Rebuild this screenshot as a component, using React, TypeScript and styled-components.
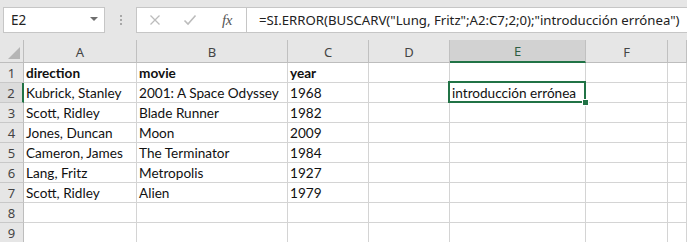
import React from "react";
import styled, { createGlobalStyle, css } from "styled-components";

const Global = createGlobalStyle`
  html, body { margin: 0; padding: 0; background: #ffffff; }
  body { width: 687px; height: 242px; overflow: hidden; }
`;

const Page = styled.div`
  width: 687px;
  height: 242px;
  overflow: hidden;
  display: flex;
  flex-direction: column;
  background: #fff;
`;

const FormulaBar = styled.div`
  height: 40px;
  flex: none;
  background: #e6e6e6;
  display: flex;
  align-items: flex-start;
  padding: 7px 0 0 3px;
  box-sizing: border-box;
`;

const NameBox = styled.div`
  width: 102px;
  height: 26px;
  box-sizing: border-box;
  background: #fff;
  border: 1px solid #c6c6c6;
  display: flex;
  align-items: center;
  justify-content: space-between;
  padding: 0 6px 0 7px;
  font-family: "Noto Sans", "Open Sans", sans-serif;
  font-size: 13.5px;
  color: #222;
`;

const Caret = styled.span`
  width: 0;
  height: 0;
  border-left: 4px solid transparent;
  border-right: 4px solid transparent;
  border-top: 4px solid #6e6e6e;
  margin-bottom: 3px;
`;

const Grip = styled.div`
  width: 31px;
  height: 26px;
  display: flex;
  flex-direction: column;
  align-items: center;
  justify-content: center;
  gap: 2px;
`;

const GripDot = styled.span`
  width: 2px;
  height: 2px;
  background: #a8a8a8;
`;

const IconBox = styled.div`
  width: 110px;
  height: 26px;
  box-sizing: border-box;
  background: #fff;
  border: 1px solid #c6c6c6;
  border-right: none;
  display: flex;
  align-items: center;
  padding-left: 12px;
  gap: 22px;
`;

const Fx = styled.span`
  font-family: "Liberation Serif", serif;
  font-style: italic;
  font-size: 15px;
  color: #555;
  letter-spacing: -0.5px;
  margin-left: 3px;
`;

const FormulaInput = styled.div`
  flex: 1;
  height: 26px;
  box-sizing: border-box;
  background: #fff;
  border: 1px solid #c6c6c6;
  border-right: none;
  display: flex;
  align-items: center;
  padding-left: 12px;
  font-family: "Noto Sans", "Open Sans", sans-serif;
  font-size: 13.2px;
  color: #222;
  white-space: nowrap;
  overflow: hidden;
`;

const Sheet = styled.div`
  display: grid;
  grid-template-columns: 24px 113px 151px 81px 81px 136px 82px 1fr;
  grid-template-rows: 23px repeat(9, 20px);
  font-family: "Lato", "Liberation Sans", sans-serif;
`;

const Corner = styled.div`
  background: #e6e6e6;
  border-right: 1px solid #bdbdbd;
  border-bottom: 1px solid #bdbdbd;
  box-sizing: border-box;
  position: relative;
  &::after {
    content: "";
    position: absolute;
    right: 3px;
    bottom: 3px;
    width: 0;
    height: 0;
    border-left: 12px solid transparent;
    border-bottom: 12px solid #b5b5b5;
  }
`;

const ColHead = styled.div<{ $sel?: boolean }>`
  background: #e6e6e6;
  border-right: 1px solid #c0c0c0;
  border-bottom: 1px solid #bdbdbd;
  box-sizing: border-box;
  display: flex;
  align-items: center;
  justify-content: center;
  font-family: "Noto Sans", "Open Sans", sans-serif;
  font-size: 13px;
  color: #444;
  padding-top: 1px;
  ${(p) =>
    p.$sel &&
    css`
      background: #d2d2d2;
      color: #2f5e43;
      border-bottom: 2px solid #217346;
    `}
`;

const RowHead = styled.div<{ $sel?: boolean }>`
  background: #e6e6e6;
  border-right: 1px solid #bdbdbd;
  border-bottom: 1px solid #c8c8c8;
  box-sizing: border-box;
  display: flex;
  align-items: center;
  justify-content: center;
  font-family: "Noto Sans", "Open Sans", sans-serif;
  font-size: 13px;
  color: #444;
  ${(p) =>
    p.$sel &&
    css`
      border-right: 2px solid #217346;
      background: #dcdcdc;
    `}
`;

const Cell = styled.div<{ $bold?: boolean }>`
  border-right: 1px solid #d4d4d4;
  border-bottom: 1px solid #d4d4d4;
  box-sizing: border-box;
  display: flex;
  align-items: center;
  padding: 1px 0 0 2px;
  font-size: 13.6px;
  color: #111;
  white-space: nowrap;
  overflow: visible;
  font-weight: ${(p) => (p.$bold ? 700 : 400)};
`;

const ActiveCell = styled(Cell)`
  position: relative;
  overflow: visible;
  &::before {
    content: "";
    position: absolute;
    left: -2px;
    top: -2px;
    right: -1px;
    bottom: -1px;
    border: 2px solid #217346;
    pointer-events: none;
  }
  &::after {
    content: "";
    position: absolute;
    right: -4px;
    bottom: -4px;
    width: 5px;
    height: 5px;
    background: #217346;
    border: 1px solid #fff;
  }
`;

const cols = ["A", "B", "C", "D", "E", "F", ""];

const data: string[][] = [
  ["direction", "movie", "year"],
  ["Kubrick, Stanley", "2001: A Space Odyssey", "1968"],
  ["Scott, Ridley", "Blade Runner", "1982"],
  ["Jones, Duncan", "Moon", "2009"],
  ["Cameron, James", "The Terminator", "1984"],
  ["Lang, Fritz", "Metropolis", "1927"],
  ["Scott, Ridley", "Alien", "1979"],
  [],
  [],
];

export default function App() {
  return (
    <Page>
      <Global />
      <FormulaBar>
        <NameBox>
          E2
          <Caret />
        </NameBox>
        <Grip>
          <GripDot />
          <GripDot />
          <GripDot />
        </Grip>
        <IconBox>
          <svg width="12" height="12" viewBox="0 0 12 12">
            <path d="M1.5 1.5 L10.5 10.5 M10.5 1.5 L1.5 10.5" stroke="#bcbcbc" strokeWidth="1.3" fill="none" />
          </svg>
          <svg width="14" height="12" viewBox="0 0 14 12">
            <path d="M1.5 6.5 L5 10 L12.5 1.5" stroke="#bcbcbc" strokeWidth="1.6" fill="none" />
          </svg>
          <Fx>fx</Fx>
        </IconBox>
        <FormulaInput>
          =SI.ERROR(BUSCARV("Lung, Fritz";A2:C7;2;0);"introducción errónea")
        </FormulaInput>
      </FormulaBar>
      <Sheet>
        <Corner />
        {cols.map((c, i) => (
          <ColHead key={i} $sel={c === "E"}>
            {c}
          </ColHead>
        ))}
        {data.map((row, r) => (
          <React.Fragment key={r}>
            <RowHead $sel={r === 1}>{r + 1}</RowHead>
            {cols.map((_, ci) => {
              if (r === 1 && ci === 4) {
                return <ActiveCell key={ci}>introducción errónea</ActiveCell>;
              }
              return (
                <Cell key={ci} $bold={r === 0}>
                  {row[ci] ?? ""}
                </Cell>
              );
            })}
          </React.Fragment>
        ))}
      </Sheet>
    </Page>
  );
}
